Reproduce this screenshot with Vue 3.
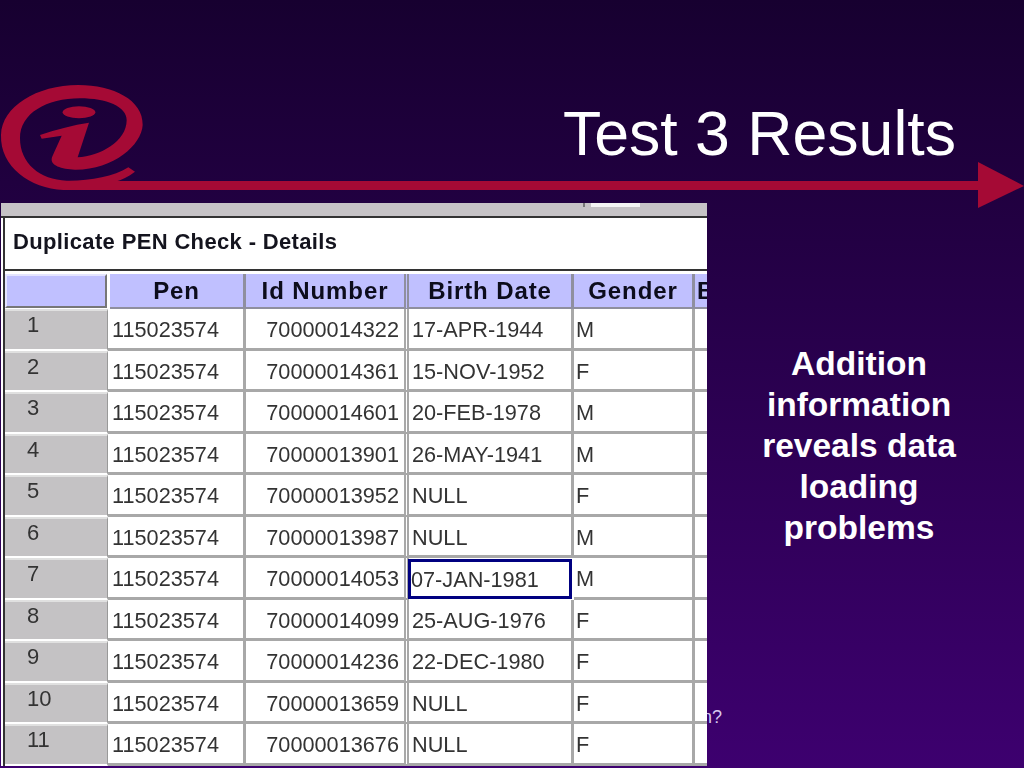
<script setup>
const cols = ['Pen', 'Id Number', 'Birth Date', 'Gender', 'B']
const rows = [
  ['115023574', '70000014322', '17-APR-1944', 'M'],
  ['115023574', '70000014361', '15-NOV-1952', 'F'],
  ['115023574', '70000014601', '20-FEB-1978', 'M'],
  ['115023574', '70000013901', '26-MAY-1941', 'M'],
  ['115023574', '70000013952', 'NULL', 'F'],
  ['115023574', '70000013987', 'NULL', 'M'],
  ['115023574', '70000014053', '07-JAN-1981', 'M'],
  ['115023574', '70000014099', '25-AUG-1976', 'F'],
  ['115023574', '70000014236', '22-DEC-1980', 'F'],
  ['115023574', '70000013659', 'NULL', 'F'],
  ['115023574', '70000013676', 'NULL', 'F']
]
</script>

<template>
  <div class="slide">
    <header class="top">
      <svg class="brand" width="1024" height="140" viewBox="0 70 1024 140">
        <g fill="#a50a35">
          <g transform="translate(0 70) scale(.33333)">
            <path d="M385 292 L405 305 C385 320 365 330 345 335 C300 352 240 362 190 360 C90 355 0 290 3 195 C5 110 110 45 235 45 C340 45 430 90 428 165 C425 225 340 300 225 299 C185 298 148 287 156 262 C165 240 175 220 185 197 L125 206 L120 195 C170 178 220 165 267 158 L233 262 C300 258 380 215 380 150 C380 110 320 85 240 85 C140 85 60 130 60 205 C60 280 120 330 200 332 C270 333 340 320 385 292 Z" />
            <ellipse cx="237" cy="127" rx="49" ry="18" />
          </g>
          <rect x="65" y="181" width="915" height="9" />
          <path d="M978 162 L1024 186 L978 208 Z" />
        </g>
      </svg>
      <h1 class="title">Test 3 Results</h1>
    </header>

    <main class="body">
      <section class="panel">
        <div class="strip"><span class="tick"></span><span class="patch"></span></div>
        <div class="heading">Duplicate PEN Check - Details</div>
        <div class="grid">
          <div class="corner"></div>
          <div v-for="c in cols" :key="c" class="hcell">{{ c }}</div>
          <template v-for="(r, i) in rows" :key="i">
            <div class="rowhead">{{ i + 1 }}</div>
            <div class="cell pen">{{ r[0] }}</div>
            <div class="cell num">{{ r[1] }}</div>
            <div class="cell date" :class="{ selected: i === 6 }">{{ r[2] }}</div>
            <div class="cell">{{ r[3] }}</div>
            <div class="cell tail"></div>
          </template>
        </div>
      </section>
      <p class="note">Addition information reveals data loading problems</p>
    </main>
    <span class="peek">n?</span>
  </div>
</template>

<style>
html, body { background: #2a004d; }
</style>

<style scoped>
.slide {
  position: relative;
  width: 1024px;
  height: 768px;
  overflow: hidden;
  background: linear-gradient(180deg, #170030 0%, #3d006f 100%);
  font-family: "Liberation Sans", Arial, sans-serif;
}
.top {
  position: relative;
  height: 203px;
  display: flex;
  justify-content: flex-end;
}
.brand { position: absolute; left: 0; top: 70px; }
.title {
  position: relative;
  margin: 98px 68px 0 0;
  font-size: 62.6px;
  line-height: 70px;
  font-weight: 400;
  color: #fff;
}
.body { display: flex; position: relative; z-index: 1; }
.panel {
  position: relative;
  width: 706px;
  height: 563px;
  margin-left: 1px;
  background: #fff;
  color: #333;
  overflow: hidden;
  display: flex;
  flex-direction: column;
  filter: blur(.45px);
}
.strip {
  position: relative;
  height: 13px;
  flex: none;
  background: #c6c3c6;
  border-bottom: 2px solid #333;
}
.tick { position: absolute; left: 582px; top: 0; width: 2px; height: 4px; background: #777; }
.patch { position: absolute; left: 590px; top: 0; width: 49px; height: 4px; background: #f4f4f4; }
.heading {
  flex: none;
  height: 51px;
  margin-left: 2px;
  padding-left: 8px;
  border-left: 2px solid #333;
  border-bottom: 2px solid #333;
  font-size: 22px;
  line-height: 48px;
  font-weight: 700;
  letter-spacing: .35px;
  color: #14141e;
}
.grid {
  display: grid;
  grid-template-columns: 103px 138px 163px 165px 121px 12px;
  grid-template-rows: 38px repeat(11, 41.5px);
  margin-left: 2px;
  border-left: 2px solid #333;
  flex: 1;
}
.corner {
  margin: 3px 1px 1px 0;
  background: #c0c0ff;
  border-top: 2px solid #e4e4ff;
  border-left: 2px solid #e4e4ff;
  border-right: 2px solid #777;
  border-bottom: 2px solid #777;
}
.hcell {
  margin-top: 3px;
  background: #c0c0ff;
  border-right: 3px solid #8f8f9f;
  border-bottom: 2px solid #8f8f9f;
  font-size: 24px;
  font-weight: 700;
  letter-spacing: .9px;
  line-height: 33px;
  text-align: center;
  color: #0c0c1c;
  white-space: nowrap;
  overflow: hidden;
}
.hcell:nth-child(2) { margin-left: 2px; }
.hcell:nth-child(3) { border-right: 5px double #8f8f9f; }
.hcell:nth-child(6) { text-align: left; border-right: 0; padding-left: 2px; }
.rowhead {
  background: #c4c2c4;
  border-top: 2px solid #e0e0e0;
  border-right: 1px solid #999;
  border-bottom: 2px solid #fff;
  padding-left: 22px;
  font-size: 22px;
  line-height: 28px;
  color: #333;
}
.cell {
  border-right: 3px solid #a8a8a8;
  border-bottom: 3px solid #a8a8a8;
  padding-left: 2px;
  font-size: 21.7px;
  line-height: 41px;
  white-space: nowrap;
  overflow: hidden;
}
.tail { border-right: 0; padding-left: 0; }
.pen { padding-left: 4px; }
.num {
  padding-left: 0;
  padding-right: 5px;
  text-align: right;
  border-right: 5px double #a8a8a8;
}
.date { padding-left: 3px; }
.selected {
  margin: 1px 2px 1px -1px;
  border: 3px solid #000080;
  padding-left: 0;
  line-height: 35px;
}
.note {
  width: 220px;
  margin: 140px 0 0 42px;
  text-align: center;
  font-size: 33.5px;
  line-height: 41px;
  font-weight: 700;
  color: #fff;
}
.peek {
  position: absolute;
  right: 302px;
  top: 706px;
  font-size: 18px;
  line-height: 22px;
  color: #d6c8ee;
}
</style>
